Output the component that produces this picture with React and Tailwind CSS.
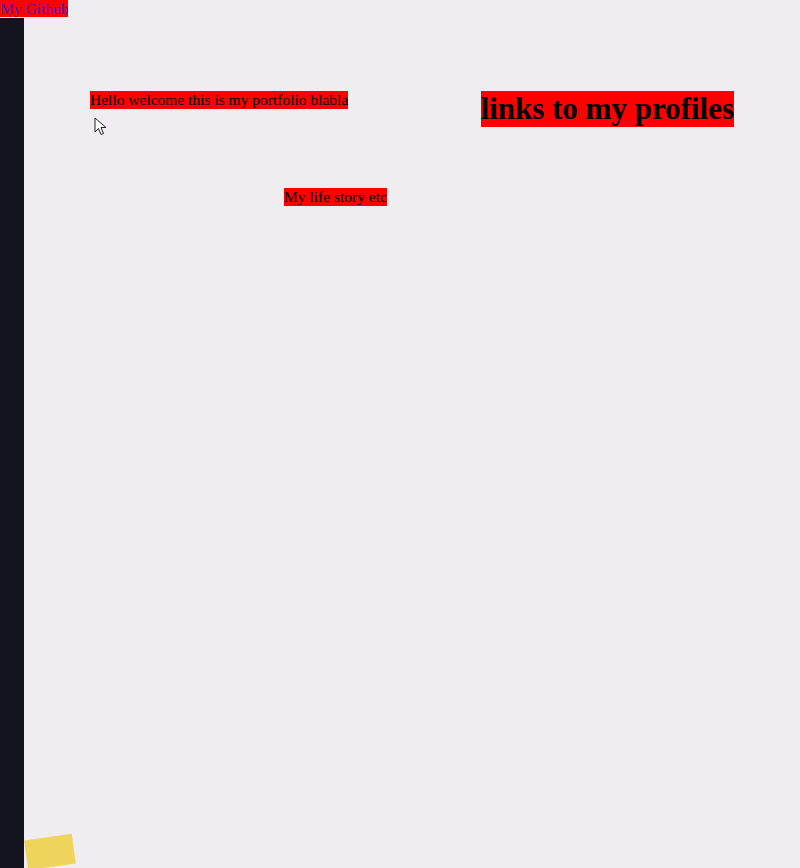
export default function App() {
  return (
    <div className="relative h-[868px] overflow-hidden bg-[#efedf0] font-['Liberation_Serif',serif] text-black flex flex-col">
      <div className="leading-[18px] text-[15.5px]">
        <a href="#" className="bg-[#ff0000] text-[#4a1cb0]">My Github</a>
      </div>

      <div className="flex flex-1">
        <div className="w-6 bg-[#12131c]" />

        <div className="flex-1 pt-[73px] px-[66px]">
          <div className="flex items-start justify-between">
            <p className="bg-[#ff0000] text-[15.5px] leading-[18px]">Hello welcome this is my portfolio blabla</p>
            <h1 className="bg-[#ff0000] text-[31px] font-bold leading-[36px]">links to my profiles</h1>
          </div>

          <p className="mt-[61px] ml-[194px] w-fit bg-[#ff0000] text-[15.5px] leading-[18px]">My life story etc</p>
        </div>
      </div>

      {/* mouse pointer */}
      <svg className="absolute left-[94px] top-[117px]" width="14" height="20" viewBox="0 0 14 20">
        <path d="M1 1 L1 15 L4.5 11.5 L7 17.5 L9.5 16.5 L7 10.5 L12 10.5 Z" fill="white" stroke="#222" strokeWidth="1" strokeLinejoin="round" />
      </svg>

      {/* sticky note */}
      <div className="absolute left-[26px] top-[837px] w-[48px] h-[30px] bg-[#efd55e] -rotate-[8deg]" />
    </div>
  );
}
